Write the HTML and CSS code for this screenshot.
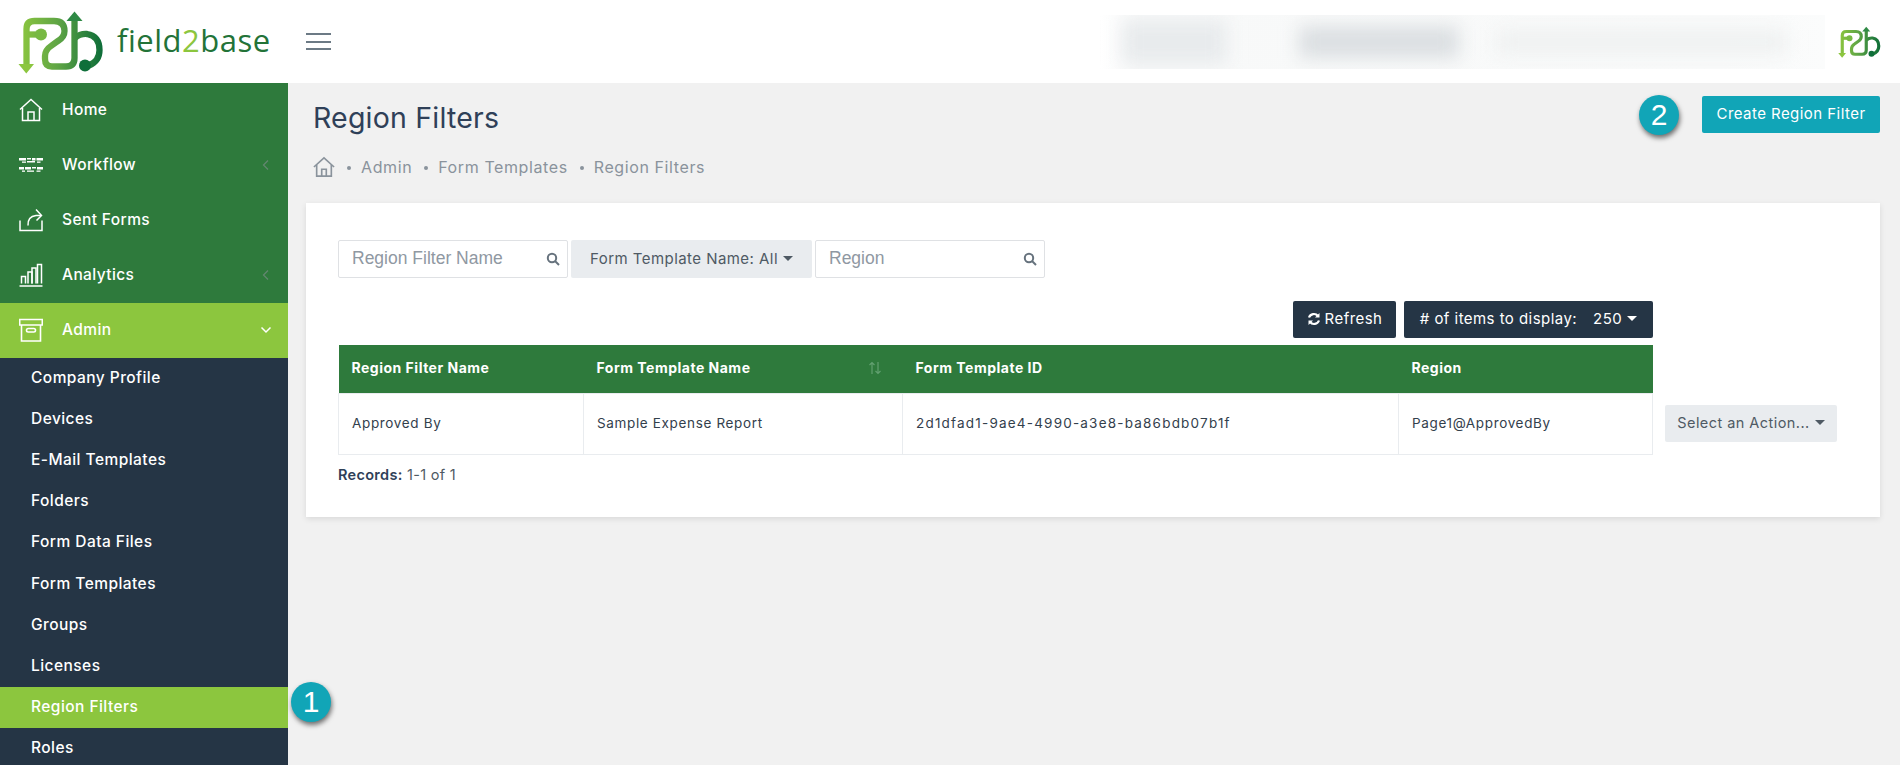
FILE: index.html
```html
<!DOCTYPE html>
<html lang="en">
<head>
    <meta charset="UTF-8">
    <meta name="viewport" content="width=device-width, initial-scale=1.0">
    <title>Region Filters</title>
    <link rel="stylesheet" href="styles.css">
</head>
<body>
    <svg class="defs" width="0" height="0">
        <defs>
            <linearGradient id="logoGrad" gradientUnits="userSpaceOnUse" x1="20" y1="40" x2="104" y2="40">
                <stop offset="0" stop-color="#8cc63f"/>
                <stop offset="0.45" stop-color="#5fa545"/>
                <stop offset="1" stop-color="#0b6b38"/>
            </linearGradient>
            <symbol id="logoMark" viewBox="18 9 86 64">
                <g fill="none" stroke="url(#logoGrad)" stroke-width="6.3">
                    <path d="M26.500 64V28Q26.500 20 34.500 20H54Q64.500 20 64.500 30Q64.500 36 58 40L51 45Q45 49 45 55V58Q45 65.500 52 65.500H66Q74.500 65.500 74.500 57V18"/>
                    <path d="M27 33.500H41"/>
                    <path d="M75 37Q80 32.500 87 33Q99.500 35 99.500 49Q99.500 60 89 64.500"/>
                </g>
                <circle cx="41" cy="33.500" r="6" fill="#78b943"/>
                <circle cx="85" cy="64.500" r="6" fill="#0f6f3a"/>
                <path d="M18.500 63H34L26.300 72.500Z" fill="#8cc63f"/>
                <path d="M66.500 20L74.500 10.500L82.500 20Z" fill="#2f8a45"/>
            </symbol>
        </defs>
    </svg>

    <header class="topbar">
        <a class="brand" href="#">
            <svg class="brand-mark"><use href="#logoMark"/></svg>
            <span class="brand-name">field<em>2</em>base</span>
        </a>
        <button class="burger" aria-label="Menu"><span></span><span></span><span></span></button>
        <div class="account-blur">
            <div class="blur-block blur-a"></div>
            <div class="blur-block blur-b"></div>
            <div class="blur-block blur-c"></div>
        </div>
        <svg class="brand-small"><use href="#logoMark"/></svg>
    </header>

    <div class="layout">
        <nav class="sidebar">
            <a class="nav-item" href="#">
                <svg class="nav-icon" viewBox="0 0 24 24" fill="none" stroke="currentColor" stroke-width="1.5">
                    <path d="M1 11.500L12 1.500L23 11.500"/>
                    <path d="M3.500 10V22.500H20.500V10"/>
                    <path d="M9 22.500V14H15V22.500"/>
                </svg>
                Home
            </a>
            <a class="nav-item" href="#">
                <svg class="nav-icon" viewBox="0 0 24 24" fill="#fff">
                    <rect x="0" y="5" width="7" height="2.500"/><rect x="8" y="5" width="4" height="1.500"/><rect x="13" y="5" width="3.500" height="2.500"/><rect x="17.500" y="5" width="6.500" height="2.500"/>
                    <rect x="3" y="8.500" width="4" height="1.300"/><rect x="8" y="8" width="8" height="1.500"/><rect x="18" y="8.500" width="3.500" height="1.300"/>
                    <rect x="0" y="14" width="5" height="2.500"/><rect x="6" y="14" width="6" height="2.500"/><rect x="13" y="14" width="4" height="1.500"/><rect x="18" y="14" width="6" height="2.500"/>
                    <rect x="3" y="17.500" width="3" height="1.300"/><rect x="8" y="17.500" width="7" height="1.300"/><rect x="17.500" y="17.500" width="4" height="1.300"/>
                </svg>
                Workflow
                <svg class="chevron chevron-muted" viewBox="0 0 10 12" fill="none" stroke="currentColor" stroke-width="1.300"><path d="M7 1.500L2.500 6L7 10.500"/></svg>
            </a>
            <a class="nav-item" href="#">
                <svg class="nav-icon" viewBox="0 0 24 24" fill="none" stroke="currentColor" stroke-width="1.5">
                    <path d="M1 12.500V22.500H23V12.500"/>
                    <path d="M9 17.500Q8.500 8.500 17 7.500H22"/>
                    <path d="M17 1.500L22.500 7.500L17.500 12.500"/>
                </svg>
                Sent Forms
            </a>
            <a class="nav-item" href="#">
                <svg class="nav-icon" viewBox="0 0 24 24" fill="none" stroke="currentColor" stroke-width="1.5">
                    <path d="M0.500 23H23.500"/>
                    <path d="M2.500 20.500V13.500H6.500V20.500"/>
                    <path d="M9 20.500V9H13V20.500"/>
                    <path d="M13 20.500V5H17V20.500"/>
                    <path d="M18.500 20.500V1.500H22.500V20.500"/>
                </svg>
                Analytics
                <svg class="chevron chevron-muted" viewBox="0 0 10 12" fill="none" stroke="currentColor" stroke-width="1.300"><path d="M7 1.500L2.500 6L7 10.500"/></svg>
            </a>
            <a class="nav-item active" href="#">
                <svg class="nav-icon" viewBox="0 0 24 24" fill="none" stroke="currentColor" stroke-width="1.6">
                    <path d="M0.700 1.500H23.300V7H0.700Z"/>
                    <path d="M2.500 7V23H21.500V7"/>
                    <rect x="7.500" y="10.500" width="9" height="3.500" rx="1.700"/>
                </svg>
                Admin
                <svg class="chevron" viewBox="0 0 12 10" fill="none" stroke="currentColor" stroke-width="1.500"><path d="M1.500 2.500L6 7L10.500 2.500"/></svg>
            </a>
            <div class="subnav">
                <a class="sub-item" href="#">Company Profile</a>
                <a class="sub-item" href="#">Devices</a>
                <a class="sub-item" href="#">E-Mail Templates</a>
                <a class="sub-item" href="#">Folders</a>
                <a class="sub-item" href="#">Form Data Files</a>
                <a class="sub-item" href="#">Form Templates</a>
                <a class="sub-item" href="#">Groups</a>
                <a class="sub-item" href="#">Licenses</a>
                <a class="sub-item active" href="#">Region Filters <span class="badge badge-one">1</span></a>
                <a class="sub-item" href="#">Roles</a>
            </div>
        </nav>

        <main class="content">
            <div class="page-head">
                <div class="page-title">
                    <h1>Region Filters</h1>
                    <ol class="crumbs">
                        <li>
                            <svg class="crumb-home" viewBox="0 0 24 24" fill="none" stroke="currentColor" stroke-width="1.8">
                                <path d="M1 12L12 2L23 12"/>
                                <path d="M4 9.500V22H20V9.500"/>
                                <path d="M9.500 22V14.500H14.500V22"/>
                            </svg>
                        </li>
                        <li>Admin</li>
                        <li>Form Templates</li>
                        <li>Region Filters</li>
                    </ol>
                </div>
                <div class="page-actions">
                    <span class="badge badge-two">2</span>
                    <button class="btn btn-create">Create Region Filter</button>
                </div>
            </div>

            <section class="card">
                <div class="filters">
                    <div class="search-box">
                        <input type="text" placeholder="Region Filter Name">
                        <svg viewBox="0 0 14 14" fill="none" stroke="currentColor" stroke-width="2"><circle cx="6" cy="6" r="4.200"/><path d="M9 9L13 13"/></svg>
                    </div>
                    <button class="btn btn-light btn-filter">Form Template Name: All <i class="caret"></i></button>
                    <div class="search-box">
                        <input type="text" placeholder="Region">
                        <svg viewBox="0 0 14 14" fill="none" stroke="currentColor" stroke-width="2"><circle cx="6" cy="6" r="4.200"/><path d="M9 9L13 13"/></svg>
                    </div>
                </div>

                <div class="toolbar">
                    <button class="btn btn-dark btn-refresh">
                        <svg viewBox="0 0 14 14" fill="none" stroke="currentColor" stroke-width="2.200">
                            <path d="M2 5.500A5.200 5.200 0 0 1 11 4"/>
                            <path d="M12 8.500A5.200 5.200 0 0 1 3 10"/>
                            <path d="M12.500 1V5.500H8" fill="currentColor" stroke="none"/>
                            <path d="M1.500 13V8.500H6" fill="currentColor" stroke="none"/>
                        </svg>
                        Refresh
                    </button>
                    <button class="btn btn-dark btn-items"># of items to display: <span class="items-count">250</span> <i class="caret"></i></button>
                </div>

                <div class="table-row">
                    <table class="data-table">
                        <colgroup>
                            <col class="col-name"><col class="col-template"><col class="col-id"><col class="col-region">
                        </colgroup>
                        <thead>
                            <tr>
                                <th>Region Filter Name</th>
                                <th>
                                    <div class="th-sort">Form Template Name
                                        <svg class="sort-icon" viewBox="0 0 14 14" fill="none" stroke="currentColor" stroke-width="1.200">
                                            <path d="M4 13V1.500M1.500 4L4 1.500L6.500 4"/>
                                            <path d="M10 1V12.500M7.500 10L10 12.500L12.500 10"/>
                                        </svg>
                                    </div>
                                </th>
                                <th>Form Template ID</th>
                                <th>Region</th>
                            </tr>
                        </thead>
                        <tbody>
                            <tr>
                                <td>Approved By</td>
                                <td>Sample Expense Report</td>
                                <td class="cell-id">2d1dfad1-9ae4-4990-a3e8-ba86bdb07b1f</td>
                                <td>Page1@ApprovedBy</td>
                            </tr>
                        </tbody>
                    </table>
                    <button class="btn btn-light btn-action">Select an Action...<i class="caret"></i></button>
                </div>
                <p class="records"><strong>Records:</strong> 1-1 of 1</p>
            </section>
        </main>
    </div>
</body>
</html>
```

FILE: styles.css
```css
:root {
    --green: #2e7a3c;
    --lime: #8cc63e;
    --navy: #253545;
    --teal: #11a5b7;
    --page: #f1f1f1;
    --light: #e9ecef;
    --muted: #8a939c;
}

* {
    margin: 0;
    padding: 0;
    box-sizing: border-box;
}

html, body {
    height: 765px;
    overflow: hidden;
}

body {
    font-family: 'Inter', 'Liberation Sans', sans-serif;
    background: var(--page);
    color: var(--navy);
}

a {
    color: inherit;
    text-decoration: none;
}

button {
    font-family: inherit;
    border: none;
    cursor: pointer;
}

.defs {
    position: absolute;
}

.topbar {
    display: flex;
    align-items: center;
    height: 83px;
    background: #fff;
    padding-right: 19px;
}

.brand {
    display: flex;
    align-items: center;
    width: 306px;
    padding-left: 18px;
}

.brand-mark {
    width: 86px;
    height: 64px;
    margin-right: 13px;
}

.brand-name {
    font-family: 'Open Sans', sans-serif;
    font-size: 31px;
    letter-spacing: 0.5px;
    color: #237338;
    line-height: 1;
    margin-top: -2px;
}

.brand-name em {
    font-style: normal;
    color: var(--lime);
}

.burger {
    display: flex;
    flex-direction: column;
    justify-content: space-between;
    width: 25px;
    height: 17px;
    background: none;
}

.burger span {
    display: block;
    height: 2px;
    background: #6c7a85;
}

.account-blur {
    display: flex;
    align-items: center;
    width: 725px;
    height: 54px;
    margin-left: auto;
    margin-right: 13px;
    background: linear-gradient(to right, #fff, #f8f9f9 40px, #f9fafa 620px, #fbfcfc);
    overflow: hidden;
}

.blur-block {
    filter: blur(9px);
}

.blur-a {
    width: 105px;
    height: 44px;
    margin-left: 22px;
    background: #e8ebed;
}

.blur-b {
    width: 160px;
    height: 32px;
    margin-left: 72px;
    background: #dbdfe2;
}

.blur-c {
    width: 290px;
    height: 24px;
    margin-left: 38px;
    background: #eff1f1;
}

.brand-small {
    width: 43px;
    height: 32px;
}

.layout {
    display: flex;
    height: 682px;
}

.sidebar {
    width: 288px;
    flex-shrink: 0;
    background: var(--navy);
    color: #fff;
}

.nav-item {
    display: flex;
    align-items: center;
    height: 55px;
    padding: 0 0 2px 19px;
    background: var(--green);
    font-size: 15.5px;
    font-weight: 500;
    letter-spacing: 0.4px;
}

.nav-item.active {
    background: var(--lime);
}

.nav-icon {
    width: 24px;
    height: 24px;
    margin-right: 19px;
    color: #fff;
}

.chevron {
    width: 12px;
    height: 12px;
    margin-left: auto;
    margin-right: 16px;
}

.chevron-muted {
    color: #62866f;
}

.sub-item {
    position: relative;
    display: flex;
    align-items: center;
    height: 41.1px;
    padding: 0 0 2px 31px;
    font-size: 15.5px;
    font-weight: 500;
    letter-spacing: 0.45px;
}

.sub-item.active {
    background: var(--lime);
}

.badge {
    display: flex;
    align-items: center;
    justify-content: center;
    width: 40px;
    height: 40px;
    border-radius: 50%;
    background: var(--teal);
    color: #fff;
    font-family: 'Liberation Sans', sans-serif;
    font-size: 30px;
    letter-spacing: 0;
    font-weight: 400;
    box-shadow: 1px 3px 5px rgba(0, 0, 0, 0.55);
}

.badge-one {
    position: absolute;
    left: 291px;
    top: -5px;
}

.content {
    flex: 1;
    padding: 0 20px 0 18px;
}

.page-head {
    display: flex;
    justify-content: space-between;
    height: 120px;
    padding-left: 7px;
}

.page-title h1 {
    margin-top: 17px;
    font-size: 28.5px;
    line-height: 36px;
    letter-spacing: 0.2px;
    font-weight: 400;
    color: #2f4058;
}

.crumbs {
    display: flex;
    align-items: center;
    margin-top: 20px;
    list-style: none;
    font-size: 16px;
    letter-spacing: 0.6px;
    color: var(--muted);
}

.crumbs li + li::before {
    content: '';
    display: inline-block;
    width: 4px;
    height: 4px;
    margin: 0 10px 3px 12px;
    border-radius: 50%;
    background: var(--muted);
}

.crumb-home {
    display: block;
    width: 22px;
    height: 22px;
}

.page-actions {
    display: flex;
    align-items: flex-start;
    padding-top: 13px;
}

.badge-two {
    margin-top: -1px;
    margin-right: 23px;
}

.btn {
    display: inline-flex;
    align-items: center;
    justify-content: center;
    height: 37px;
    padding-bottom: 2px;
    border-radius: 2px;
    font-size: 15px;
    letter-spacing: 0.45px;
}

.btn-create {
    width: 178px;
    background: var(--teal);
    color: #fff;
}

.btn-light {
    background: var(--light);
    color: #4f5a64;
}

.btn-dark {
    background: var(--navy);
    color: #fff;
}

.caret {
    display: inline-block;
    margin-left: 5px;
    border-top: 5px solid currentColor;
    border-left: 5px solid transparent;
    border-right: 5px solid transparent;
}

.card {
    height: 314px;
    background: #fff;
    padding: 37px 0 0 32px;
    box-shadow: 0 2px 6px rgba(0, 0, 0, 0.1);
}

.filters {
    display: flex;
    gap: 3px;
}

.search-box {
    position: relative;
    width: 230px;
    height: 38px;
}

.search-box input {
    width: 100%;
    height: 100%;
    padding: 0 30px 2px 13px;
    border: 1px solid #dfe1e4;
    border-radius: 2px;
    font-family: 'Liberation Sans', sans-serif;
    font-size: 17.5px;
    outline: none;
}

.search-box input::placeholder {
    color: #8f98a2;
}

.search-box svg {
    position: absolute;
    right: 8px;
    top: 12px;
    width: 14px;
    height: 14px;
    color: #66727d;
}

.btn-filter {
    width: 241px;
    height: 38px;
}

.toolbar {
    display: flex;
    justify-content: flex-end;
    gap: 8px;
    width: 1315px;
    margin-top: 23px;
}

.btn-refresh {
    width: 103px;
    gap: 4px;
}

.btn-refresh svg {
    width: 14px;
    height: 14px;
}

.btn-items {
    width: 249px;
}

.items-count {
    margin-left: 16px;
}

.table-row {
    display: flex;
    margin-top: 7px;
}

.data-table {
    width: 1315px;
    table-layout: fixed;
    border-collapse: collapse;
    font-size: 13.5px;
    letter-spacing: 0.65px;
}

.col-name { width: 245px; }
.col-template { width: 319px; }
.col-id { width: 496px; }

.data-table th {
    height: 48px;
    padding: 0 13px 2px;
    background: var(--green);
    color: #fff;
    font-size: 14px;
    font-weight: 700;
    text-align: left;
    letter-spacing: 0.5px;
}

.th-sort {
    display: flex;
    align-items: center;
    justify-content: space-between;
}

.sort-icon {
    width: 14px;
    height: 14px;
    margin-right: 8px;
    color: #62a070;
}

.data-table td {
    height: 61px;
    padding: 0 13px 2px;
    border: 1px solid #e9ecef;
    color: #33404c;
}

.data-table .cell-id {
    letter-spacing: 1.2px;
}

.btn-action {
    flex-shrink: 0;
    width: 172px;
    margin: 60px 0 0 12px;
    font-size: 14.5px;
}

.records {
    margin-top: 9px;
    font-size: 14.5px;
    line-height: 21px;
    letter-spacing: 0.3px;
    color: #4f5a64;
}

.records strong {
    color: #2f4058;
    font-weight: 600;
}
```
